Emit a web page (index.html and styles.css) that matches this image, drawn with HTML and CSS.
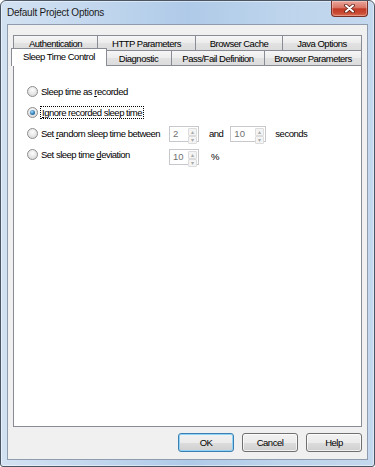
FILE: index.html
```html
<!DOCTYPE html>
<html lang="en">
<head>
    <meta charset="UTF-8">
    <title>Default Project Options</title>
    <link rel="stylesheet" href="styles.css">
</head>
<body>
    <div class="window">
        <div class="titlebar">
            <span class="title">Default Project Options</span>
            <div class="close">
                <svg width="11" height="9" viewBox="0 0 11 9">
                    <path d="M2 1.5 L9 7.5 M9 1.5 L2 7.5" stroke="#5a2018" stroke-width="3.6" stroke-linecap="round"/>
                    <path d="M2 1.5 L9 7.5 M9 1.5 L2 7.5" stroke="#fff" stroke-width="2" stroke-linecap="round"/>
                </svg>
            </div>
        </div>

        <div class="client">
            <div class="tabctl">
                <div class="tab-row">
                    <div class="tab w84">Authentication</div>
                    <div class="tab w98">HTTP Parameters</div>
                    <div class="tab w87">Browser Cache</div>
                    <div class="tab w80">Java Options</div>
                </div>
                <div class="tab-row">
                    <div class="tab selected">Sleep Time Control</div>
                    <div class="tab w66">Diagnostic</div>
                    <div class="tab w93">Pass/Fail Definition</div>
                    <div class="tab w98">Browser Parameters</div>
                </div>

                <div class="panel">
                    <div class="opt-row">
                        <div class="opt"><span class="radio"></span><span>Sleep time as <u>r</u>ecorded</span></div>
                    </div>
                    <div class="opt-row">
                        <div class="opt"><span class="radio on"><span class="dot"></span></span><span class="focus"><u>I</u>gnore recorded sleep time</span></div>
                    </div>
                    <div class="opt-row">
                        <div class="opt"><span class="radio"></span><span>Set <u>r</u>andom sleep time between</span></div>
                        <span class="spin w30"><span class="val">2</span><span class="arrows"><span class="arr">&#9652;</span><span class="arr">&#9662;</span></span></span>
                        <span class="word and">and</span>
                        <span class="spin w36"><span class="val">10</span><span class="arrows"><span class="arr">&#9652;</span><span class="arr">&#9662;</span></span></span>
                        <span class="word secs">seconds</span>
                    </div>
                    <div class="opt-row">
                        <div class="opt"><span class="radio"></span><span>Set sleep time <u>d</u>eviation</span></div>
                        <span class="spin w30 low"><span class="val">10</span><span class="arrows"><span class="arr">&#9652;</span><span class="arr">&#9662;</span></span></span>
                        <span class="word pct">%</span>
                    </div>
                </div>
            </div>

            <div class="buttons">
                <div class="btn default">OK</div>
                <div class="btn">Cancel</div>
                <div class="btn">Help</div>
            </div>
        </div>
    </div>
</body>
</html>
```

FILE: styles.css
```css
* {
    box-sizing: border-box;
}
body {
    margin: 0;
    background: #fff;
    font-family: "Liberation Sans", Arial, sans-serif;
    font-size: 9.5px;
    letter-spacing: -0.5px;
    color: #000;
}
.window {
    width: 375px;
    height: 467px;
    display: flex;
    flex-direction: column;
    padding: 0 6px 6px 6px;
    border: 1px solid #4b5664;
    border-radius: 6px 6px 3px 3px;
    background: linear-gradient(90deg, #d3e2f2 0%, #c2d7ee 25%, #afcae8 50%, #bdd4ec 75%, #c4d8ee 100%);
    box-shadow: inset 0 0 0 1px rgba(255,255,255,0.45);
}
.titlebar {
    height: 23px;
    display: flex;
    justify-content: space-between;
    align-items: flex-start;
}
.title {
    padding-top: 6px;
    font-size: 10px;
    letter-spacing: -0.25px;
    color: #1b1b1b;
}
.close {
    width: 37px;
    height: 16px;
    display: flex;
    align-items: center;
    justify-content: center;
    border: 1px solid #7a2f26;
    border-top: none;
    border-radius: 0 0 4px 4px;
    background: linear-gradient(#eaa69a 0%, #d97565 45%, #c23a26 52%, #c94a33 80%, #dc6e52 100%);
    box-shadow: inset 0 0 0 1px rgba(255,255,255,0.3);
}
.client {
    flex: 1;
    display: flex;
    flex-direction: column;
    padding: 10px 5px 0 5px;
    background: #f0f0f0;
    border: 1px solid #8e9cae;
}
.tabctl {
    width: 349px;
}
.tab-row {
    display: flex;
    height: 15px;
    align-items: flex-start;
}
.tab {
    height: 15px;
    display: flex;
    align-items: center;
    justify-content: center;
    border: 1px solid #898c95;
    border-bottom: none;
    border-right: none;
    background: linear-gradient(#f6f6f6 0%, #ececec 50%, #e2e2e2 51%, #dcdcdc 100%);
    white-space: nowrap;
}
.tab:last-child {
    border-right: 1px solid #898c95;
}
.w66 { width: 66px; }
.w80 { width: 80px; }
.w84 { width: 84px; }
.w87 { width: 87px; }
.w93 { width: 93px; }
.w98 { width: 98px; }
.tab.selected {
    position: relative;
    z-index: 1;
    width: 96px;
    height: 18px;
    margin: -2px -2px 0 -2px;
    align-items: flex-start;
    padding-top: 2px;
    border-right: 1px solid #898c95;
    background: #fff;
}
.panel {
    height: 362px;
    padding: 15px 0 0 13px;
    background: #fff;
    border: 1px solid #898c95;
}
.opt-row {
    display: flex;
    align-items: center;
    height: 21px;
}
.opt {
    width: 142px;
    display: flex;
    align-items: center;
    gap: 3px;
    white-space: nowrap;
}
.radio {
    flex: none;
    width: 11px;
    height: 11px;
    display: flex;
    align-items: center;
    justify-content: center;
    border: 1px solid #8d8d8d;
    border-radius: 50%;
    background: radial-gradient(circle at 50% 35%, #fdfdfd 0%, #e6e6e6 55%, #cfcfcf 100%);
}
.radio .dot {
    width: 5px;
    height: 5px;
    border-radius: 50%;
    background: radial-gradient(circle at 40% 35%, #a6dcf7 0%, #2c7bb6 55%, #1a4f7d 100%);
}
.focus {
    outline: 1px dotted #000;
    outline-offset: 0;
    padding: 0 1px;
}
.spin {
    height: 16px;
    display: flex;
    border: 1px solid #c6c8cc;
    background: #fff;
    letter-spacing: 0;
}
.spin.w30 { width: 30px; }
.spin.w36 { width: 36px; }
.spin.low { margin-top: 4px; }
.val {
    flex: 1;
    padding-left: 3px;
    color: #707070;
    line-height: 14px;
}
.arrows {
    width: 11px;
    display: flex;
    flex-direction: column;
    padding: 1px;
}
.arr {
    flex: 1;
    display: flex;
    align-items: center;
    justify-content: center;
    font-size: 6px;
    line-height: 6px;
    color: #a8a8a8;
    background: #f4f4f4;
    border: 1px solid #dcdcdc;
    border-radius: 1px;
}
.word {
    white-space: nowrap;
}
.and { margin: 0 7px 0 10px; }
.secs { margin-left: 9px; }
.pct { margin-left: 12px; margin-top: 4px; }
.buttons {
    display: flex;
    justify-content: flex-end;
    gap: 8px;
    width: 349px;
    margin-top: 6px;
}
.btn {
    width: 56px;
    height: 19px;
    display: flex;
    align-items: center;
    justify-content: center;
    border: 1px solid #707070;
    border-radius: 3px;
    background: linear-gradient(#f2f2f2 0%, #ebebeb 50%, #dddddd 51%, #cfcfcf 100%);
    box-shadow: inset 0 0 0 1px rgba(255,255,255,0.7);
}
.btn.default {
    border-color: #3c7fb1;
    box-shadow: inset 0 0 0 1px #8fd3f6;
}
```
